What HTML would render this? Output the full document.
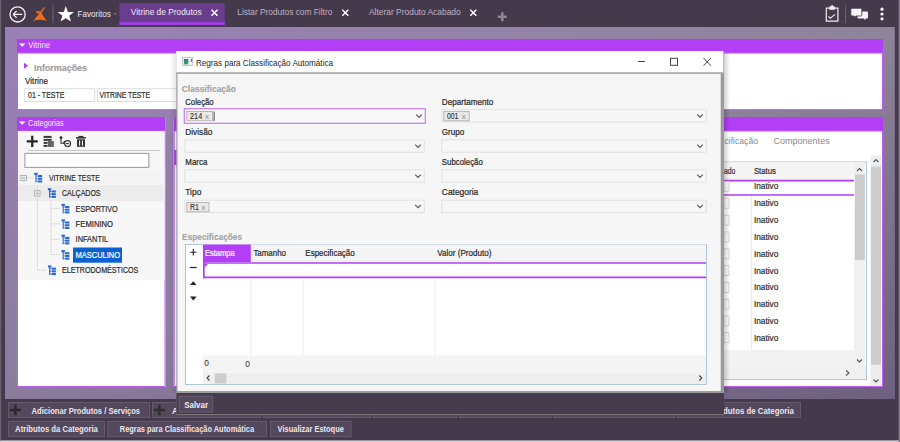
<!DOCTYPE html><html><head><meta charset="utf-8"><title>Vitrine de Produtos</title><style>html,body{margin:0;padding:0;width:900px;height:442px;overflow:hidden;background:#45394c;}text{font-family:"Liberation Sans", sans-serif;}</style></head><body><svg width="900" height="442" viewBox="0 0 900 442" style="display:block;font-family:'Liberation Sans', sans-serif"><rect x="0" y="0" width="900" height="442" fill="#45394c" />
<defs><linearGradient id="lavH" x1="0" y1="0" x2="1" y2="0"><stop offset="0" stop-color="#9a80b8"/><stop offset="1" stop-color="#8e849a"/></linearGradient><linearGradient id="lavV" x1="0" y1="0" x2="0" y2="1"><stop offset="0" stop-color="#7e7886" stop-opacity="0"/><stop offset="1" stop-color="#7e7886" stop-opacity="0.55"/></linearGradient><linearGradient id="lavD" x1="0.5" y1="0.5" x2="1" y2="1"><stop offset="0" stop-color="#3a1a5a" stop-opacity="0"/><stop offset="1" stop-color="#3a1a5a" stop-opacity="0.3"/></linearGradient><linearGradient id="icg" x1="0" y1="0" x2="0" y2="1"><stop offset="0" stop-color="#2f6fb8"/><stop offset="1" stop-color="#2fae3a"/></linearGradient><linearGradient id="shL" x1="0" y1="0" x2="1" y2="0"><stop offset="0" stop-color="#000" stop-opacity="0"/><stop offset="1" stop-color="#000" stop-opacity="0.1"/></linearGradient><linearGradient id="shR" x1="0" y1="0" x2="1" y2="0"><stop offset="0" stop-color="#000" stop-opacity="0.18"/><stop offset="1" stop-color="#000" stop-opacity="0"/></linearGradient></defs>
<rect x="5" y="27" width="889.8" height="372" fill="url(#lavH)" />
<rect x="5" y="27" width="889.8" height="372" fill="url(#lavV)" />
<rect x="5" y="27" width="889.8" height="372" fill="url(#lavD)" />
<rect x="0" y="440.4" width="900" height="1.6" fill="#d6d4d8" />
<rect x="898.6" y="0" width="1.4" height="442" fill="#857c8c" />
<rect x="0" y="0" width="1.2" height="440.4" fill="#6a6270" />
<circle cx="17.6" cy="14.4" r="7.6" fill="none" stroke="#f2f2f2" stroke-width="1.3"/>
<path d="M13.2 14.4 H22.2 M13.2 14.4 L16.6 11 M13.2 14.4 L16.6 17.8" fill="none" stroke="#f2f2f2" stroke-width="1.3" />
<path d="M45.1 6.6 Q45.6 7.4 44.2 9.2 L41.3 12.8 Q43.5 16.6 46.7 21.1 Q40.5 18.4 33.4 20.9 Q36.5 16.8 39.2 13.7 Q37.2 13.3 36 12.2 Q35.9 11 36.8 10.9 Q39 11.3 40.5 11.6 Q42.6 8.6 45.1 6.6 Z" fill="#f46d0c" />
<line x1="53" y1="5" x2="53" y2="23" stroke="#6e6275" stroke-width="1" />
<path d="M65.8 6 L67.9 11.9 L74 12 L69.2 15.8 L71 21.6 L65.8 18.2 L60.6 21.6 L62.4 15.8 L57.6 12 L63.7 11.9 Z" fill="#ffffff" />
<text x="77.5" y="16.9" font-size="9.4" fill="#ece6f0" textLength="33.4" lengthAdjust="spacingAndGlyphs" >Favoritos</text>
<path d="M113.4 13.2 H116.8 L115.1 14.8 Z" fill="#8a8092" />
<rect x="119.4" y="3.2" width="105.3" height="21.7" fill="#6b3d8e" />
<rect x="119.4" y="22.2" width="105.3" height="2.7" fill="#a440ee" />
<text x="130.8" y="15.1" font-size="8.6" fill="#f0e8f6" textLength="70.8" lengthAdjust="spacingAndGlyphs" >Vitrine de Produtos</text>
<path d="M211.5 9.8 L217.5 15.8 M217.5 9.8 L211.5 15.8" fill="none" stroke="#ffffff" stroke-width="1.5" />
<text x="237.3" y="15.3" font-size="8.6" fill="#bcb2c4" textLength="95" lengthAdjust="spacingAndGlyphs" >Listar Produtos com Filtro</text>
<path d="M342.3 9.8 L348.3 15.8 M348.3 9.8 L342.3 15.8" fill="none" stroke="#ffffff" stroke-width="1.5" />
<text x="369" y="15.3" font-size="8.6" fill="#bcb2c4" textLength="91.7" lengthAdjust="spacingAndGlyphs" >Alterar Produto Acabado</text>
<path d="M470.3 9.8 L476.3 15.8 M476.3 9.8 L470.3 15.8" fill="none" stroke="#ffffff" stroke-width="1.5" />
<path d="M502.3 12.3 V21.3 M497.8 16.8 H506.8" fill="none" stroke="#8e8496" stroke-width="2.6" />
<path d="M829.6 8.2 H826.3 V21.2 H837.9 V8.2 H834.6" fill="none" stroke="#f0f0f0" stroke-width="1.2" />
<rect x="829.3" y="6.4" width="5.6" height="3.4" fill="#f0f0f0" />
<circle cx="832.1" cy="5.9" r="1" fill="#f0f0f0"/>
<path d="M828.4 16.3 L830.3 18.2 L835 14.4" fill="none" stroke="#f0f0f0" stroke-width="1.1" />
<line x1="845.6" y1="5" x2="845.6" y2="23" stroke="#6e6275" stroke-width="1" />
<path d="M858.6 11.6 H866.9 Q868 11.6 868 12.7 V17.4 Q868 18.5 866.9 18.5 H865.4 V20.2 L863.7 18.5 H858.6 Q857.5 18.5 857.5 17.4 V12.7 Q857.5 11.6 858.6 11.6 Z" fill="#f6f6f6" />
<path d="M852 8.2 H860.6 Q861.8 8.2 861.8 9.4 V14.8 Q861.8 16 860.6 16 H856.2 L854.3 17.8 V16 H852 Q850.8 16 850.8 14.8 V9.4 Q850.8 8.2 852 8.2 Z" fill="#f6f6f6" stroke="#45394c" stroke-width="0.9" />
<circle cx="882" cy="9.2" r="1.6" fill="#f6f6f6"/><circle cx="882" cy="14" r="1.6" fill="#f6f6f6"/><circle cx="882" cy="18.8" r="1.6" fill="#f6f6f6"/>
<rect x="17" y="39" width="866" height="71" fill="#ffffff" />
<rect x="17" y="39" width="866" height="14" fill="#b23ef6" />
<rect x="17.5" y="53" width="865" height="56.6" fill="none" stroke="#c060f8" stroke-width="1.1" />
<path d="M19 43.4 H25.4 L22.2 46.8 Z" fill="#ffffff" />
<text x="28.3" y="47.5" font-size="8.8" fill="#f6eefc" textLength="21.7" lengthAdjust="spacingAndGlyphs" >Vitrine</text>
<path d="M24 62.8 L28 65.8 L24 68.8 Z" fill="#b23ef6" />
<text x="34" y="70.8" font-size="9.6" fill="#9c9c9c" font-weight="bold" stroke="#9c9c9c" stroke-width="0.15" textLength="53" lengthAdjust="spacingAndGlyphs" >Informações</text>
<text x="25" y="84.3" font-size="8.4" fill="#2e2e2e" stroke="#2e2e2e" stroke-width="0.2" textLength="23" lengthAdjust="spacingAndGlyphs" >Vitrine</text>
<rect x="24.7" y="88.7" width="70" height="12.8" fill="#ffffff" stroke="#dcdcdc" stroke-width="1" />
<text x="28" y="97.9" font-size="8.4" fill="#2e2e2e" stroke="#2e2e2e" stroke-width="0.2" textLength="36.4" lengthAdjust="spacingAndGlyphs" >01 - TESTE</text>
<rect x="97.4" y="88.7" width="100" height="12.8" fill="#ffffff" stroke="#dcdcdc" stroke-width="1" />
<text x="99.4" y="97.9" font-size="8.4" fill="#2e2e2e" stroke="#2e2e2e" stroke-width="0.2" textLength="50.6" lengthAdjust="spacingAndGlyphs" >VITRINE TESTE</text>
<rect x="17" y="117" width="148.5" height="270" fill="#ffffff" />
<rect x="17" y="117" width="148.5" height="14" fill="#b23ef6" />
<rect x="17.5" y="131" width="147.5" height="255.5" fill="none" stroke="#c060f8" stroke-width="1" />
<rect x="18" y="131" width="146.5" height="149" fill="#f7f7f7" />
<path d="M19 121.4 H25.4 L22.2 124.8 Z" fill="#ffffff" />
<text x="28.1" y="125.7" font-size="8.8" fill="#f6eefc" textLength="35.6" lengthAdjust="spacingAndGlyphs" >Categorias</text>
<path d="M32.25 135.8 V146.9 M26.7 141.35 H37.8" fill="none" stroke="#262626" stroke-width="2.3" />
<rect x="43.6" y="135.9" width="8" height="2" fill="#3a3a3a" />
<rect x="43.6" y="138.9" width="8" height="2" fill="#3a3a3a" />
<rect x="43.6" y="141.9" width="4" height="2" fill="#3a3a3a" />
<rect x="43.6" y="144.9" width="4" height="2" fill="#3a3a3a" />
<rect x="48" y="141.2" width="5.8" height="5.6" fill="#4a4a4a" />
<line x1="48" y1="143.1" x2="53.8" y2="143.1" stroke="#bbb" stroke-width="0.5" />
<line x1="48" y1="145" x2="53.8" y2="145" stroke="#bbb" stroke-width="0.5" />
<circle cx="61" cy="137.6" r="1.4" fill="#222"/>
<path d="M61 137.6 V143.3 H64.5" fill="none" stroke="#333" stroke-width="1.1" />
<circle cx="65.2" cy="142.6" r="1.9" fill="#333"/>
<circle cx="67.6" cy="143.6" r="3" fill="#f7f7f7" stroke="#333" stroke-width="1.1"/>
<line x1="65.9" y1="143.6" x2="69.3" y2="143.6" stroke="#333" stroke-width="1" />
<rect x="76" y="137" width="9.8" height="1.6" fill="#333" />
<rect x="78.5" y="135.9" width="5" height="1.4" fill="#333" />
<rect x="77" y="139.3" width="8" height="7.5" fill="#333" />
<rect x="79" y="140.6" width="1.1" height="5" fill="#f7f7f7" />
<rect x="81.9" y="140.6" width="1.1" height="5" fill="#f7f7f7" />
<line x1="27.5" y1="150.5" x2="160" y2="150.5" stroke="#c8c8c8" stroke-width="1" />
<rect x="24.9" y="153.4" width="124" height="14" fill="#ffffff" stroke="#a0a0a0" stroke-width="1.1" />
<rect x="18" y="170" width="146.5" height="16" fill="#f4f4f4" />
<rect x="18" y="185" width="146.5" height="16" fill="#ececec" />
<rect x="20.9" y="175.4" width="5.6" height="5.2" fill="#f4f4f4" stroke="#a8a8a8" stroke-width="0.9" />
<line x1="22.3" y1="178" x2="25.1" y2="178" stroke="#5a7ac8" stroke-width="0.9" />
<rect x="34.4" y="190.7" width="5.6" height="5.2" fill="#f4f4f4" stroke="#a8a8a8" stroke-width="0.9" />
<line x1="35.8" y1="193.3" x2="38.6" y2="193.3" stroke="#5a7ac8" stroke-width="0.9" />
<line x1="27" y1="177.75" x2="33" y2="177.75" stroke="#d0d0d0" stroke-width="1" stroke-dasharray="1 0.6"/>
<line x1="37.4" y1="186" x2="37.4" y2="270" stroke="#d0d0d0" stroke-width="1" stroke-dasharray="1 0.6"/>
<line x1="40.5" y1="193.25" x2="47" y2="193.25" stroke="#d0d0d0" stroke-width="1" stroke-dasharray="1 0.6"/>
<line x1="51" y1="201" x2="51" y2="254.5" stroke="#d0d0d0" stroke-width="1" stroke-dasharray="1 0.6"/>
<line x1="51" y1="208.4" x2="60" y2="208.4" stroke="#d0d0d0" stroke-width="1" stroke-dasharray="1 0.6"/>
<line x1="51" y1="223.9" x2="60" y2="223.9" stroke="#d0d0d0" stroke-width="1" stroke-dasharray="1 0.6"/>
<line x1="51" y1="239.3" x2="60" y2="239.3" stroke="#d0d0d0" stroke-width="1" stroke-dasharray="1 0.6"/>
<line x1="51" y1="254.6" x2="60" y2="254.6" stroke="#d0d0d0" stroke-width="1" stroke-dasharray="1 0.6"/>
<line x1="37.4" y1="270" x2="46" y2="270" stroke="#d0d0d0" stroke-width="1" stroke-dasharray="1 0.6"/>
<g fill="#2a6ad0"><rect x="34.3" y="172.8" width="3.4" height="2.2"/><rect x="35.4" y="174.8" width="1.1" height="7.6"/><rect x="36.3" y="175.60000000000002" width="1.2" height="1"/><rect x="36.3" y="178.20000000000002" width="1.2" height="1"/><rect x="36.3" y="180.8" width="1.2" height="1"/><rect x="37.9" y="175.0" width="4.3" height="2.1"/><rect x="37.9" y="177.70000000000002" width="4.3" height="2.1"/><rect x="37.9" y="180.4" width="4.3" height="2.1"/></g>
<text x="48.9" y="181" font-size="8.4" fill="#2e2e2e" stroke="#2e2e2e" stroke-width="0.2" textLength="50.8" lengthAdjust="spacingAndGlyphs" >VITRINE TESTE</text>
<g fill="#2a6ad0"><rect x="47.9" y="188.2" width="3.4" height="2.2"/><rect x="49.0" y="190.2" width="1.1" height="7.6"/><rect x="49.9" y="191.0" width="1.2" height="1"/><rect x="49.9" y="193.6" width="1.2" height="1"/><rect x="49.9" y="196.2" width="1.2" height="1"/><rect x="51.5" y="190.39999999999998" width="4.3" height="2.1"/><rect x="51.5" y="193.1" width="4.3" height="2.1"/><rect x="51.5" y="195.79999999999998" width="4.3" height="2.1"/></g>
<text x="62" y="196.3" font-size="8.4" fill="#2e2e2e" stroke="#2e2e2e" stroke-width="0.2" textLength="38.5" lengthAdjust="spacingAndGlyphs" >CALÇADOS</text>
<g fill="#2a6ad0"><rect x="61.5" y="203.8" width="3.4" height="2.2"/><rect x="62.6" y="205.8" width="1.1" height="7.6"/><rect x="63.5" y="206.60000000000002" width="1.2" height="1"/><rect x="63.5" y="209.20000000000002" width="1.2" height="1"/><rect x="63.5" y="211.8" width="1.2" height="1"/><rect x="65.1" y="206.0" width="4.3" height="2.1"/><rect x="65.1" y="208.70000000000002" width="4.3" height="2.1"/><rect x="65.1" y="211.4" width="4.3" height="2.1"/></g>
<text x="75.6" y="211.5" font-size="8.4" fill="#2e2e2e" stroke="#2e2e2e" stroke-width="0.2" textLength="42" lengthAdjust="spacingAndGlyphs" >ESPORTIVO</text>
<g fill="#2a6ad0"><rect x="61.5" y="219.3" width="3.4" height="2.2"/><rect x="62.6" y="221.3" width="1.1" height="7.6"/><rect x="63.5" y="222.10000000000002" width="1.2" height="1"/><rect x="63.5" y="224.70000000000002" width="1.2" height="1"/><rect x="63.5" y="227.3" width="1.2" height="1"/><rect x="65.1" y="221.5" width="4.3" height="2.1"/><rect x="65.1" y="224.20000000000002" width="4.3" height="2.1"/><rect x="65.1" y="226.9" width="4.3" height="2.1"/></g>
<text x="75.6" y="227.0" font-size="8.4" fill="#2e2e2e" stroke="#2e2e2e" stroke-width="0.2" textLength="37.5" lengthAdjust="spacingAndGlyphs" >FEMININO</text>
<g fill="#2a6ad0"><rect x="61.5" y="234.70000000000002" width="3.4" height="2.2"/><rect x="62.6" y="236.70000000000002" width="1.1" height="7.6"/><rect x="63.5" y="237.50000000000003" width="1.2" height="1"/><rect x="63.5" y="240.10000000000002" width="1.2" height="1"/><rect x="63.5" y="242.70000000000002" width="1.2" height="1"/><rect x="65.1" y="236.9" width="4.3" height="2.1"/><rect x="65.1" y="239.60000000000002" width="4.3" height="2.1"/><rect x="65.1" y="242.3" width="4.3" height="2.1"/></g>
<text x="75.6" y="242.4" font-size="8.4" fill="#2e2e2e" stroke="#2e2e2e" stroke-width="0.2" textLength="32.5" lengthAdjust="spacingAndGlyphs" >INFANTIL</text>
<g fill="#2a6ad0"><rect x="61.5" y="250" width="3.4" height="2.2"/><rect x="62.6" y="252" width="1.1" height="7.6"/><rect x="63.5" y="252.8" width="1.2" height="1"/><rect x="63.5" y="255.4" width="1.2" height="1"/><rect x="63.5" y="258" width="1.2" height="1"/><rect x="65.1" y="252.2" width="4.3" height="2.1"/><rect x="65.1" y="254.9" width="4.3" height="2.1"/><rect x="65.1" y="257.6" width="4.3" height="2.1"/></g>
<rect x="73" y="247.5" width="49" height="15.2" fill="#0a62d2" />
<text x="75.6" y="257.7" font-size="8.4" fill="#ffffff" stroke="#ffffff" stroke-width="0.2" textLength="44.5" lengthAdjust="spacingAndGlyphs" >MASCULINO</text>
<g fill="#2a6ad0"><rect x="48" y="265.4" width="3.4" height="2.2"/><rect x="49.1" y="267.4" width="1.1" height="7.6"/><rect x="50" y="268.2" width="1.2" height="1"/><rect x="50" y="270.79999999999995" width="1.2" height="1"/><rect x="50" y="273.4" width="1.2" height="1"/><rect x="51.6" y="267.59999999999997" width="4.3" height="2.1"/><rect x="51.6" y="270.29999999999995" width="4.3" height="2.1"/><rect x="51.6" y="273.0" width="4.3" height="2.1"/></g>
<text x="62" y="273.2" font-size="8.4" fill="#2e2e2e" stroke="#2e2e2e" stroke-width="0.2" textLength="76.3" lengthAdjust="spacingAndGlyphs" >ELETRODOMÉSTICOS</text>
<rect x="173.7" y="117" width="709.3" height="270" fill="#ffffff" />
<rect x="173.7" y="117" width="709.3" height="14" fill="#b23ef6" />
<rect x="174.2" y="131" width="708.3" height="255.5" fill="none" stroke="#c060f8" stroke-width="1" />
<rect x="174.2" y="150" width="2.5" height="15" fill="#b23ef6" />
<text x="724.5" y="144.3" font-size="9.4" fill="#8a8a8a" textLength="33.5" lengthAdjust="spacingAndGlyphs" >cificação</text>
<text x="773.4" y="144.3" font-size="9.4" fill="#8a8a8a" textLength="56.3" lengthAdjust="spacingAndGlyphs" >Componentes</text>
<rect x="700" y="162" width="166.5" height="217.5" fill="#ffffff" stroke="#b0c6d8" stroke-width="1" />
<rect x="700" y="162.2" width="154" height="17.8" fill="#f5f5f5" />
<text x="724" y="174.3" font-size="8.4" fill="#2e2e2e" stroke="#2e2e2e" stroke-width="0.2" textLength="11.4" lengthAdjust="spacingAndGlyphs" >ado</text>
<text x="753.9" y="174.3" font-size="8.4" fill="#2e2e2e" stroke="#2e2e2e" stroke-width="0.2" textLength="22" lengthAdjust="spacingAndGlyphs" >Status</text>
<line x1="751.5" y1="180" x2="751.5" y2="350" stroke="#e8e8e8" stroke-width="1" />
<rect x="700" y="180.2" width="154" height="15" fill="#ffffff" />
<line x1="700" y1="180.6" x2="854" y2="180.6" stroke="#b23ef6" stroke-width="1.6" />
<line x1="700" y1="195" x2="854" y2="195" stroke="#b23ef6" stroke-width="1.6" />
<text x="754" y="189.3" font-size="8.4" fill="#2e2e2e" stroke="#2e2e2e" stroke-width="0.2" textLength="24.3" lengthAdjust="spacingAndGlyphs" >Inativo</text>
<rect x="724" y="181.3" width="5" height="10" fill="#ffffff" stroke="#d0d0d0" stroke-width="0.8" />
<text x="754" y="206.2" font-size="8.4" fill="#2e2e2e" stroke="#2e2e2e" stroke-width="0.2" textLength="24.3" lengthAdjust="spacingAndGlyphs" >Inativo</text>
<rect x="724" y="198.2" width="5" height="10" fill="#ffffff" stroke="#d0d0d0" stroke-width="0.8" />
<text x="754" y="223.1" font-size="8.4" fill="#2e2e2e" stroke="#2e2e2e" stroke-width="0.2" textLength="24.3" lengthAdjust="spacingAndGlyphs" >Inativo</text>
<rect x="724" y="215.1" width="5" height="10" fill="#ffffff" stroke="#d0d0d0" stroke-width="0.8" />
<text x="754" y="239.9" font-size="8.4" fill="#2e2e2e" stroke="#2e2e2e" stroke-width="0.2" textLength="24.3" lengthAdjust="spacingAndGlyphs" >Inativo</text>
<rect x="724" y="231.9" width="5" height="10" fill="#ffffff" stroke="#d0d0d0" stroke-width="0.8" />
<text x="754" y="256.8" font-size="8.4" fill="#2e2e2e" stroke="#2e2e2e" stroke-width="0.2" textLength="24.3" lengthAdjust="spacingAndGlyphs" >Inativo</text>
<rect x="724" y="248.8" width="5" height="10" fill="#ffffff" stroke="#d0d0d0" stroke-width="0.8" />
<text x="754" y="273.6" font-size="8.4" fill="#2e2e2e" stroke="#2e2e2e" stroke-width="0.2" textLength="24.3" lengthAdjust="spacingAndGlyphs" >Inativo</text>
<rect x="724" y="265.6" width="5" height="10" fill="#ffffff" stroke="#d0d0d0" stroke-width="0.8" />
<text x="754" y="290.4" font-size="8.4" fill="#2e2e2e" stroke="#2e2e2e" stroke-width="0.2" textLength="24.3" lengthAdjust="spacingAndGlyphs" >Inativo</text>
<rect x="724" y="282.4" width="5" height="10" fill="#ffffff" stroke="#d0d0d0" stroke-width="0.8" />
<text x="754" y="307.2" font-size="8.4" fill="#2e2e2e" stroke="#2e2e2e" stroke-width="0.2" textLength="24.3" lengthAdjust="spacingAndGlyphs" >Inativo</text>
<rect x="724" y="299.2" width="5" height="10" fill="#ffffff" stroke="#d0d0d0" stroke-width="0.8" />
<text x="754" y="323.9" font-size="8.4" fill="#2e2e2e" stroke="#2e2e2e" stroke-width="0.2" textLength="24.3" lengthAdjust="spacingAndGlyphs" >Inativo</text>
<rect x="724" y="315.9" width="5" height="10" fill="#ffffff" stroke="#d0d0d0" stroke-width="0.8" />
<text x="754" y="340.6" font-size="8.4" fill="#2e2e2e" stroke="#2e2e2e" stroke-width="0.2" textLength="24.3" lengthAdjust="spacingAndGlyphs" >Inativo</text>
<rect x="724" y="332.6" width="5" height="10" fill="#ffffff" stroke="#d0d0d0" stroke-width="0.8" />
<rect x="700" y="350" width="154" height="17" fill="#f2f2f2" />
<rect x="700" y="367" width="166" height="11.7" fill="#f0f0f0" />
<path d="M846 370.5 L849 373 L846 375.5" fill="none" stroke="#555" stroke-width="1.1" />
<rect x="854.1" y="162.2" width="11" height="205" fill="#f0f0f0" />
<rect x="855" y="174.5" width="10" height="85.5" fill="#cdcdcd" />
<path d="M857 171 L859.5 168.5 L862 171" fill="none" stroke="#555" stroke-width="1.1" />
<path d="M857 359.5 L859.5 362 L862 359.5" fill="none" stroke="#555" stroke-width="1.1" />
<rect x="870.4" y="155.4" width="11" height="230.5" fill="#ededed" />
<rect x="871" y="166.8" width="10" height="198" fill="#cdcdcd" />
<path d="M873.5 162 L876 159.5 L878.5 162" fill="none" stroke="#555" stroke-width="1.1" />
<path d="M873.5 379.5 L876 382 L878.5 379.5" fill="none" stroke="#555" stroke-width="1.1" />
<rect x="8.5" y="402.5" width="141" height="15" fill="#54485c" stroke="#65596d" stroke-width="1" />
<path d="M15.4 404.8 V415.2 M9.8 410 H21" fill="none" stroke="#2c2830" stroke-width="2.6" />
<text x="31.6" y="413.7" font-size="8.6" fill="#ece6f0" font-weight="bold" textLength="108.5" lengthAdjust="spacingAndGlyphs" >Adicionar Produtos / Serviços</text>
<rect x="152.5" y="402.5" width="108.5" height="15" fill="#54485c" stroke="#65596d" stroke-width="1" />
<path d="M159.4 404.8 V415.2 M153.8 410 H165" fill="none" stroke="#2c3230" stroke-width="2.6" />
<text x="172" y="413.7" font-size="8.6" fill="#ece6f0" font-weight="bold" >A</text>
<rect x="263.5" y="402.5" width="107.5" height="15" fill="#54485c" stroke="#65596d" stroke-width="1" />
<rect x="373.5" y="402.5" width="83.5" height="15" fill="#54485c" stroke="#65596d" stroke-width="1" />
<rect x="459.5" y="402.5" width="91.5" height="15" fill="#54485c" stroke="#65596d" stroke-width="1" />
<rect x="553.5" y="402.5" width="121.5" height="15" fill="#54485c" stroke="#65596d" stroke-width="1" />
<rect x="677.5" y="402.5" width="123" height="15" fill="#54485c" stroke="#65596d" stroke-width="1" />
<text x="723" y="413.7" font-size="8.6" fill="#ece6f0" font-weight="bold" textLength="70.8" lengthAdjust="spacingAndGlyphs" >dutos de Categoria</text>
<rect x="8.5" y="421.3" width="96" height="15.3" fill="#54485c" stroke="#65596d" stroke-width="1" />
<text x="15.1" y="432.3" font-size="8.6" fill="#ece6f0" font-weight="bold" textLength="82.7" lengthAdjust="spacingAndGlyphs" >Atributos da Categoria</text>
<rect x="107.7" y="421.3" width="159" height="15.3" fill="#54485c" stroke="#65596d" stroke-width="1" />
<text x="119.8" y="432.3" font-size="8.6" fill="#ece6f0" font-weight="bold" textLength="134.3" lengthAdjust="spacingAndGlyphs" >Regras para Classificação Automática</text>
<rect x="270.5" y="421.3" width="80.5" height="15.3" fill="#54485c" stroke="#65596d" stroke-width="1" />
<text x="277.6" y="432.3" font-size="8.6" fill="#ece6f0" font-weight="bold" textLength="66.3" lengthAdjust="spacingAndGlyphs" >Visualizar Estoque</text>
<rect x="724" y="53" width="6" height="340" fill="url(#shR)" />
<rect x="170" y="53" width="6.3" height="340" fill="url(#shL)" />
<rect x="176.3" y="51" width="547.7" height="364" fill="#9a9a9a" />
<rect x="176.3" y="51" width="547" height="21.6" fill="#ffffff" />
<rect x="176.3" y="72.4" width="547" height="1.5" fill="#a8a8a8" />
<rect x="177.5" y="73.9" width="543.2" height="317.1" fill="#f6f6f6" />
<rect x="177.5" y="391" width="543.2" height="2" fill="#9c9c9c" />
<rect x="182.4" y="57.5" width="10.4" height="8" fill="#f4f4f4" stroke="#b8b8b8" stroke-width="0.8" />
<rect x="183.9" y="59" width="4.4" height="5.4" fill="url(#icg)" />
<rect x="190.9" y="59" width="1.3" height="2.9" fill="url(#icg)" />
<text x="196" y="65.6" font-size="8.6" fill="#1e1e1e" textLength="137" lengthAdjust="spacingAndGlyphs" >Regras para Classificação Automática</text>
<line x1="638" y1="61.5" x2="645" y2="61.5" stroke="#444" stroke-width="1" />
<rect x="670.5" y="58.3" width="7" height="7" fill="none" stroke="#444" stroke-width="1" />
<path d="M703.5 58 L711 65.8 M711 58 L703.5 65.8" fill="none" stroke="#444" stroke-width="1" />
<text x="181.7" y="91.5" font-size="9.2" fill="#a2a2a2" font-weight="bold" stroke="#a2a2a2" stroke-width="0.1" textLength="54.3" lengthAdjust="spacingAndGlyphs" >Classificação</text>
<text x="185.3" y="104.5" font-size="8.6" fill="#2a2a2a" stroke="#2a2a2a" stroke-width="0.22" textLength="28.3" lengthAdjust="spacingAndGlyphs" >Coleção</text>
<rect x="184.3" y="108.7" width="241" height="14.6" fill="#f8f8f8" stroke="#c47cf2" stroke-width="1.2" />
<path d="M416.2 114.6 L419.0 117.4 L421.8 114.6" fill="none" stroke="#555" stroke-width="1.1" />
<rect x="186.8" y="111.5" width="25.7" height="9.2" fill="#e9e9e9" stroke="#b0b0b0" stroke-width="0.9" />
<line x1="187.3" y1="120.6" x2="212.0" y2="120.6" stroke="#c4c4c4" stroke-width="0.8" />
<text x="190.0" y="119.1" font-size="8.4" fill="#2a2a2a" stroke="#2a2a2a" stroke-width="0.1" textLength="12.3" lengthAdjust="spacingAndGlyphs" >214</text>
<text x="205.0" y="119.1" font-size="7.8" fill="#8a8a8a" textLength="4" lengthAdjust="spacingAndGlyphs" >x</text>
<rect x="213.6" y="111.5" width="1" height="9.5" fill="#444" />
<text x="185.3" y="134.79999999999998" font-size="8.6" fill="#2a2a2a" stroke="#2a2a2a" stroke-width="0.22" textLength="27" lengthAdjust="spacingAndGlyphs" >Divisão</text>
<rect x="184.8" y="139.9" width="239.5" height="12.3" fill="#f7f7f7" stroke="#e2e2e2" stroke-width="1" />
<path d="M415.2 144.65 L418.0 147.45000000000002 L420.8 144.65" fill="none" stroke="#555" stroke-width="1.1" />
<text x="185.3" y="165.0" font-size="8.6" fill="#2a2a2a" stroke="#2a2a2a" stroke-width="0.22" textLength="22" lengthAdjust="spacingAndGlyphs" >Marca</text>
<rect x="184.8" y="169.9" width="239.5" height="12.3" fill="#f7f7f7" stroke="#e2e2e2" stroke-width="1" />
<path d="M415.2 174.65 L418.0 177.45000000000002 L420.8 174.65" fill="none" stroke="#555" stroke-width="1.1" />
<text x="185.3" y="195.2" font-size="8.6" fill="#2a2a2a" stroke="#2a2a2a" stroke-width="0.22" textLength="16" lengthAdjust="spacingAndGlyphs" >Tipo</text>
<rect x="184.8" y="200.2" width="239.5" height="12.3" fill="#f7f7f7" stroke="#e2e2e2" stroke-width="1" />
<path d="M415.2 204.95 L418.0 207.75 L420.8 204.95" fill="none" stroke="#555" stroke-width="1.1" />
<rect x="186.8" y="202.5" width="22.2" height="9.2" fill="#e9e9e9" stroke="#b0b0b0" stroke-width="0.9" />
<line x1="187.3" y1="211.6" x2="208.5" y2="211.6" stroke="#c4c4c4" stroke-width="0.8" />
<text x="190.0" y="210.1" font-size="8.4" fill="#2a2a2a" stroke="#2a2a2a" stroke-width="0.1" textLength="9" lengthAdjust="spacingAndGlyphs" >R1</text>
<text x="201.5" y="210.1" font-size="7.8" fill="#8a8a8a" textLength="4" lengthAdjust="spacingAndGlyphs" >x</text>
<text x="441.8" y="104.89999999999999" font-size="8.6" fill="#2a2a2a" stroke="#2a2a2a" stroke-width="0.22" textLength="51.4" lengthAdjust="spacingAndGlyphs" >Departamento</text>
<rect x="441.7" y="109.7" width="264.6" height="12.3" fill="#f7f7f7" stroke="#e2e2e2" stroke-width="1" />
<path d="M697.2 114.45 L700.0 117.25000000000001 L702.8 114.45" fill="none" stroke="#555" stroke-width="1.1" />
<rect x="443.7" y="111.6" width="25.5" height="9.2" fill="#e9e9e9" stroke="#b0b0b0" stroke-width="0.9" />
<line x1="444.2" y1="120.69999999999999" x2="468.7" y2="120.69999999999999" stroke="#c4c4c4" stroke-width="0.8" />
<text x="446.9" y="119.19999999999999" font-size="8.4" fill="#2a2a2a" stroke="#2a2a2a" stroke-width="0.1" textLength="11.6" lengthAdjust="spacingAndGlyphs" >001</text>
<text x="461.7" y="119.19999999999999" font-size="7.8" fill="#8a8a8a" textLength="4" lengthAdjust="spacingAndGlyphs" >x</text>
<text x="441.8" y="134.9" font-size="8.6" fill="#2a2a2a" stroke="#2a2a2a" stroke-width="0.22" textLength="22.5" lengthAdjust="spacingAndGlyphs" >Grupo</text>
<rect x="441.7" y="139.9" width="264.6" height="12.3" fill="#f7f7f7" stroke="#e2e2e2" stroke-width="1" />
<path d="M697.2 144.65 L700.0 147.45000000000002 L702.8 144.65" fill="none" stroke="#555" stroke-width="1.1" />
<text x="441.8" y="165.1" font-size="8.6" fill="#2a2a2a" stroke="#2a2a2a" stroke-width="0.22" textLength="41" lengthAdjust="spacingAndGlyphs" >Subcoleção</text>
<rect x="441.7" y="169.9" width="264.6" height="12.3" fill="#f7f7f7" stroke="#e2e2e2" stroke-width="1" />
<path d="M697.2 174.65 L700.0 177.45000000000002 L702.8 174.65" fill="none" stroke="#555" stroke-width="1.1" />
<text x="441.8" y="195.4" font-size="8.6" fill="#2a2a2a" stroke="#2a2a2a" stroke-width="0.22" textLength="36.5" lengthAdjust="spacingAndGlyphs" >Categoria</text>
<rect x="441.7" y="200.2" width="264.6" height="12.3" fill="#f7f7f7" stroke="#e2e2e2" stroke-width="1" />
<path d="M697.2 204.95 L700.0 207.75 L702.8 204.95" fill="none" stroke="#555" stroke-width="1.1" />
<text x="182.1" y="240.3" font-size="9.2" fill="#a2a2a2" font-weight="bold" stroke="#a2a2a2" stroke-width="0.1" textLength="60" lengthAdjust="spacingAndGlyphs" >Especificações</text>
<rect x="185.5" y="244.5" width="521" height="140" fill="#ffffff" stroke="#b0c6d8" stroke-width="1" />
<rect x="203" y="244.5" width="503" height="17.6" fill="#f4f4f4" />
<rect x="203" y="244.5" width="47.8" height="17.6" fill="#b23ef6" />
<text x="205" y="255.8" font-size="8.4" fill="#ffffff" stroke="#ffffff" stroke-width="0.2" textLength="29.7" lengthAdjust="spacingAndGlyphs" >Estampa</text>
<text x="253.4" y="255.8" font-size="8.4" fill="#2a2a2a" stroke="#2a2a2a" stroke-width="0.2" textLength="32.6" lengthAdjust="spacingAndGlyphs" >Tamanho</text>
<text x="305.3" y="255.8" font-size="8.4" fill="#2a2a2a" stroke="#2a2a2a" stroke-width="0.2" textLength="49.5" lengthAdjust="spacingAndGlyphs" >Especificação</text>
<text x="437.2" y="255.8" font-size="8.4" fill="#2a2a2a" stroke="#2a2a2a" stroke-width="0.2" textLength="54.3" lengthAdjust="spacingAndGlyphs" >Valor (Produto)</text>
<line x1="250.8" y1="262" x2="250.8" y2="355.3" stroke="#ececec" stroke-width="1" />
<line x1="303" y1="262" x2="303" y2="355.3" stroke="#ececec" stroke-width="1" />
<line x1="435" y1="262" x2="435" y2="355.3" stroke="#ececec" stroke-width="1" />
<rect x="203" y="262.2" width="503" height="16" fill="#ffffff" />
<line x1="203" y1="263" x2="706" y2="263" stroke="#b23ef6" stroke-width="1.7" />
<line x1="203" y1="277.4" x2="706" y2="277.4" stroke="#b23ef6" stroke-width="1.7" />
<line x1="203.85" y1="262.2" x2="203.85" y2="278.2" stroke="#b23ef6" stroke-width="1.7" />
<path d="M204.5 264 L208 264 L204.5 267.5 Z" fill="#b23ef6" />
<rect x="203" y="355.3" width="503" height="17.5" fill="#f4f4f4" />
<text x="204.3" y="366.3" font-size="8.4" fill="#333" >0</text>
<text x="245.2" y="367.3" font-size="8.4" fill="#333" >0</text>
<rect x="203" y="372.8" width="503" height="11.2" fill="#efefef" />
<rect x="214.7" y="373.3" width="11.7" height="10.2" fill="#cdcdcd" />
<path d="M209.5 375.5 L207 378 L209.5 380.5" fill="none" stroke="#444" stroke-width="1.1" />
<path d="M699.3 375.5 L701.8 378 L699.3 380.5" fill="none" stroke="#444" stroke-width="1.1" />
<path d="M193.3 249 V255.4 M190.1 252.2 H196.5" fill="none" stroke="#222" stroke-width="1.1" />
<line x1="189.9" y1="267.5" x2="196.7" y2="267.5" stroke="#222" stroke-width="1.2" />
<path d="M190 285 L193.3 281.2 L196.6 285 Z" fill="#222" />
<path d="M190 296.6 L193.3 300.4 L196.6 296.6 Z" fill="#222" />
<rect x="176.3" y="393" width="547.7" height="21.4" fill="#473b4e" />
<rect x="179.2" y="396.2" width="33.5" height="15.8" fill="#54485c" stroke="#6a5f72" stroke-width="1" />
<text x="184.2" y="407.5" font-size="8.6" fill="#f0ecf4" font-weight="bold" textLength="23.8" lengthAdjust="spacingAndGlyphs" >Salvar</text></svg></body></html>
